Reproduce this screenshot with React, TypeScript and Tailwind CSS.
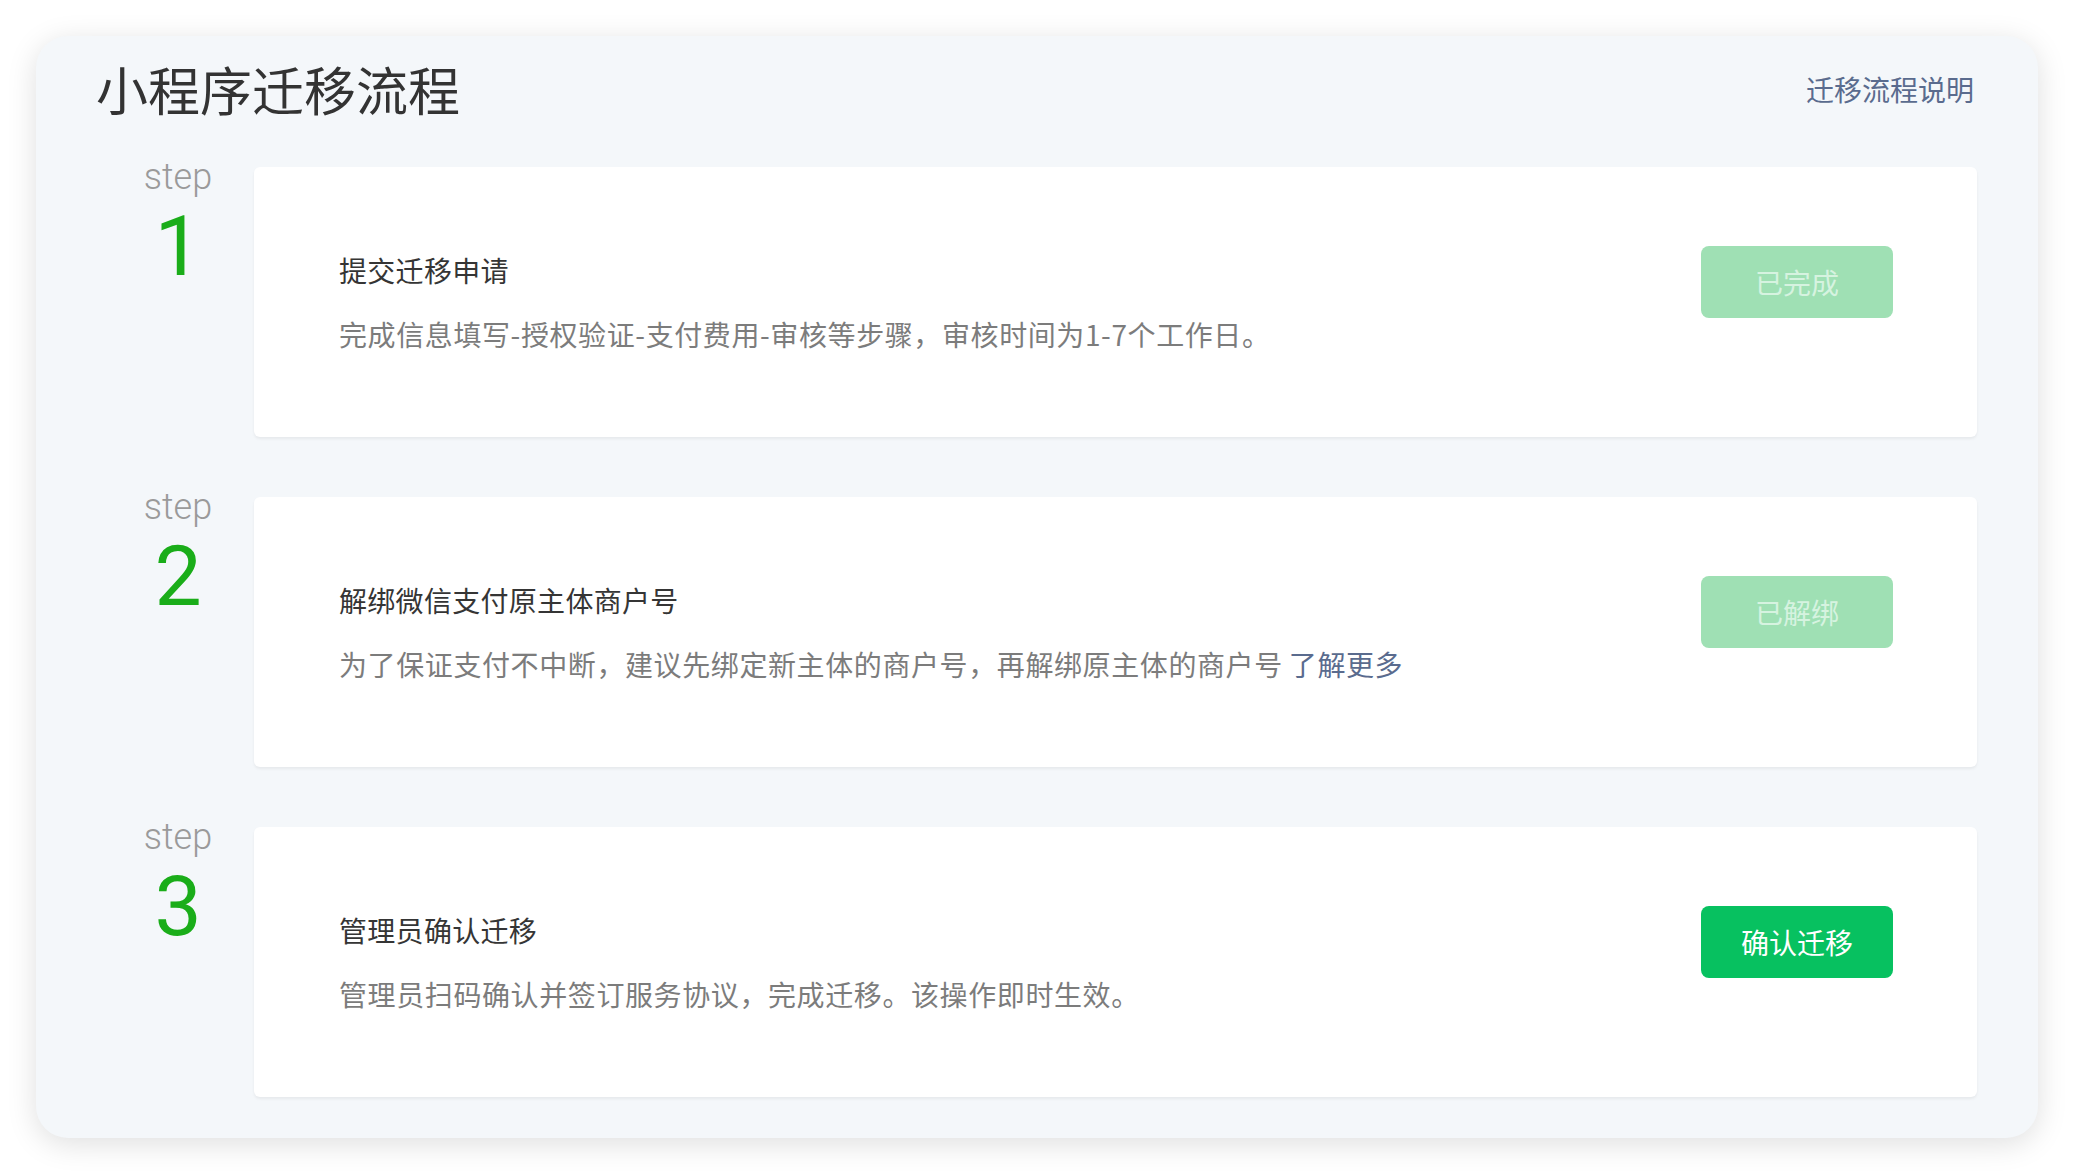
const CJK = "font-['Noto_Sans_CJK_SC',sans-serif]";

type Step = {
  no: number;
  title: string;
  desc: string;
  link?: string;
  action: string;
  done: boolean;
};

const steps: Step[] = [
  {
    no: 1,
    title: "提交迁移申请",
    desc: "完成信息填写-授权验证-支付费用-审核等步骤，审核时间为1-7个工作日。",
    action: "已完成",
    done: true,
  },
  {
    no: 2,
    title: "解绑微信支付原主体商户号",
    desc: "为了保证支付不中断，建议先绑定新主体的商户号，再解绑原主体的商户号",
    link: "了解更多",
    action: "已解绑",
    done: true,
  },
  {
    no: 3,
    title: "管理员确认迁移",
    desc: "管理员扫码确认并签订服务协议，完成迁移。该操作即时生效。",
    action: "确认迁移",
    done: false,
  },
];

export default function App() {
  return (
    <div className={`min-h-[1174px] w-full bg-white pt-[36px] ${CJK}`}>
      <div className="mx-[36px] flex h-[1102px] flex-col rounded-[32px] bg-[#f4f7fa] pb-[41px] pl-[60px] pr-[61px] pt-[21px] shadow-[0_6px_30px_rgba(0,0,0,0.13)]">
        <header className="flex h-[64px] items-center justify-between">
          <h1 className="text-[52px] font-normal leading-[64px] text-[#333333]">
            小程序迁移流程
          </h1>
          <a className="mr-[3px] text-[28px] leading-[40px] text-[#5a6b8e]">
            迁移流程说明
          </a>
        </header>

        <ol className="mt-[46px] flex flex-col gap-[60px]">
          {steps.map((s) => (
            <li key={s.no} className="flex">
              <div className="w-[158px] shrink-0 pl-[6px] text-center font-['Roboto',sans-serif]">
                <div className="-mt-[8px] text-[36px] font-light leading-none text-[#9a9a9a]">
                  step
                </div>
                <div className="mt-[10px] text-[84px] font-normal leading-none text-[#1aad19]">
                  {s.no}
                </div>
              </div>

              <div className="flex h-[270px] flex-1 items-start justify-between rounded-[6px] bg-white pl-[85px] pr-[84px] pt-[79px] shadow-[0_2px_3px_rgba(0,0,0,0.06)]">
                <div>
                  <h3 className="text-[28px] font-normal leading-[48px] tracking-[0.3px] text-[#353535]">
                    {s.title}
                  </h3>
                  <p className="mt-[16px] text-[28px] leading-[48px] tracking-[0.6px] text-[#7c7c7c]">
                    {s.desc}
                    {s.link && (
                      <a className="ml-[6px] text-[#5a6b8e]">{s.link}</a>
                    )}
                  </p>
                </div>
                <button
                  className={
                    s.done
                      ? "h-[72px] w-[192px] shrink-0 rounded-[8px] bg-[#9fe0b4] text-[28px] text-[#d6f3e0]"
                      : "h-[72px] w-[192px] shrink-0 rounded-[8px] bg-[#07c160] text-[28px] text-white"
                  }
                >
                  {s.action}
                </button>
              </div>
            </li>
          ))}
        </ol>
      </div>
    </div>
  );
}
